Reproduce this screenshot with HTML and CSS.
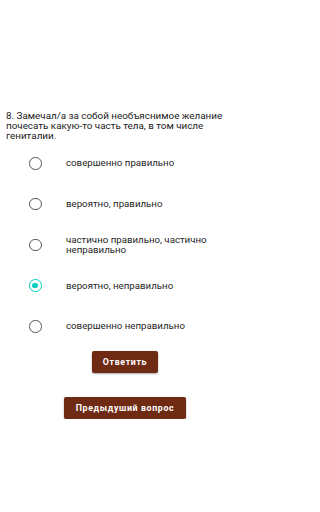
FILE: index.html
```html
<!DOCTYPE html>
<html lang="ru">
<head>
<meta charset="utf-8">
<link rel="stylesheet" href="styles.css">
</head>
<body>
<main class="page">
  <p class="question">8. Замечал/а за собой необъяснимое желание почесать какую-то часть тела, в том числе гениталии.</p>
  <ul class="options">
    <li class="option"><span class="radio"></span><span class="label">совершенно правильно</span></li>
    <li class="option"><span class="radio"></span><span class="label">вероятно, правильно</span></li>
    <li class="option"><span class="radio"></span><span class="label">частично правильно, частично неправильно</span></li>
    <li class="option"><span class="radio checked"></span><span class="label">вероятно, неправильно</span></li>
    <li class="option"><span class="radio"></span><span class="label">совершенно неправильно</span></li>
  </ul>
  <div class="actions">
    <button class="btn btn-answer">Ответить</button>
    <button class="btn btn-prev">Предыдуший вопрос</button>
  </div>
</main>
</body>
</html>
```

FILE: styles.css
```css
html, body {
  margin: 0;
  padding: 0;
  background: #ffffff;
}
body {
  width: 250px;
  font-family: Roboto, "Noto Sans", sans-serif;
}
.page {
  padding-top: 111px;
}
.question {
  margin: 0;
  padding: 0 6px;
  font-size: 9.85px;
  line-height: 9.8px;
  color: #212121;
}
.options {
  list-style: none;
  margin: 2.5px 0 0;
  padding: 0;
}
.option {
  height: 40.8px;
  display: flex;
  align-items: center;
  padding-left: 29px;
}
.radio {
  box-sizing: border-box;
  flex: 0 0 auto;
  width: 12.5px;
  height: 12.5px;
  border: 1.4px solid #5a5a5a;
  border-radius: 50%;
  margin-right: 24.5px;
  position: relative;
}
.radio.checked {
  border-color: #03d1bd;
}
.radio.checked::after {
  content: "";
  position: absolute;
  left: 2.1px;
  top: 2.1px;
  width: 5.5px;
  height: 5.5px;
  border-radius: 50%;
  background: #03d1bd;
}
.label {
  font-size: 9.7px;
  line-height: 10px;
  color: #262626;
  padding-right: 20px;
}
.actions {
  display: flex;
  flex-direction: column;
  align-items: center;
  gap: 24px;
  margin-top: 4px;
}
.btn {
  border: none;
  border-radius: 2px;
  background: #6f2a14;
  color: #ffffff;
  font-family: Roboto, "Noto Sans", sans-serif;
  font-weight: 700;
  font-size: 8.8px;
  letter-spacing: 0.65px;
  height: 22px;
  padding: 0;
  box-shadow: 0 1px 2px rgba(0,0,0,0.35);
}
.btn-answer {
  width: 66px;
}
.btn-prev {
  width: 122px;
}
```
